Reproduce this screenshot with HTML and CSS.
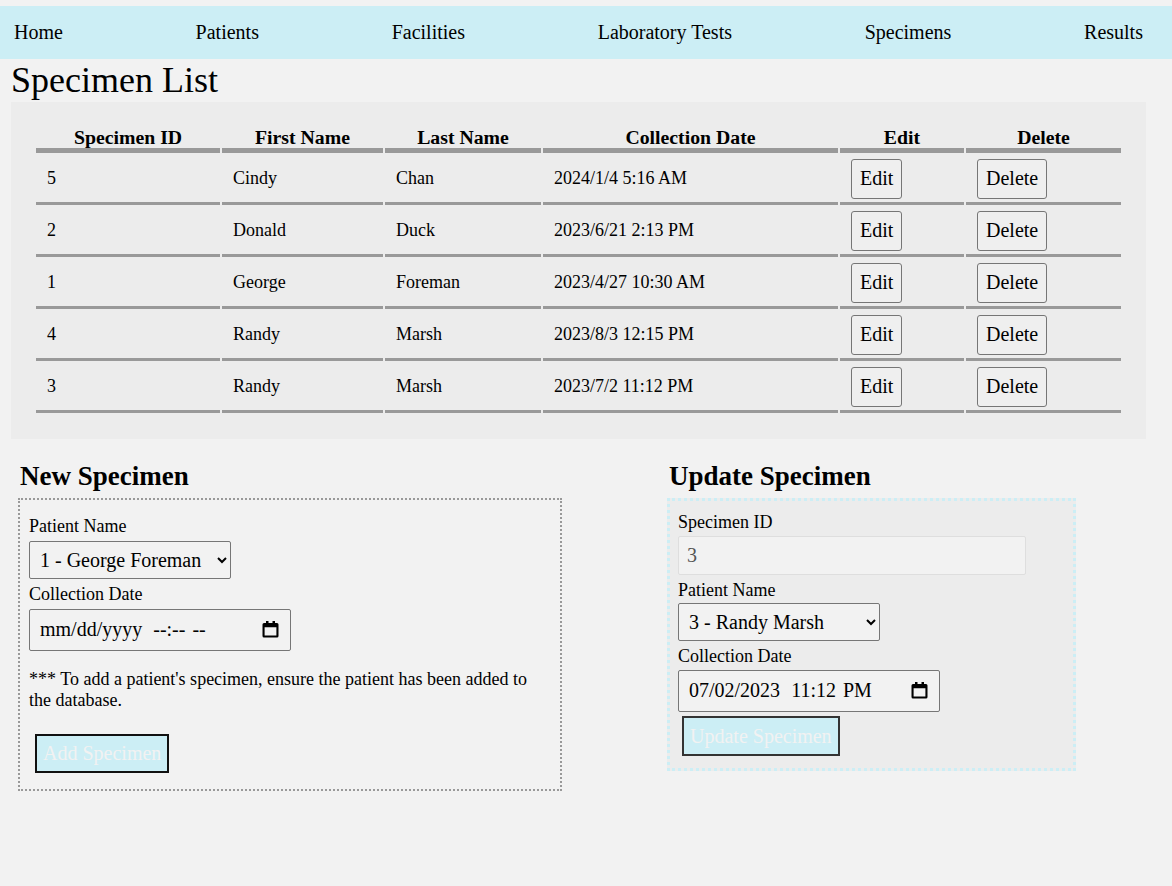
FILE: index.html
```html
<!DOCTYPE html>
<html lang="en">
<head>
<meta charset="utf-8">
<title>Specimen List</title>
<link rel="stylesheet" href="styles.css">
</head>
<body>
<nav class="topnav">
  <a class="nav-link" href="#">Home</a>
  <a class="nav-link" href="#">Patients</a>
  <a class="nav-link" href="#">Facilities</a>
  <a class="nav-link" href="#">Laboratory Tests</a>
  <a class="nav-link" href="#">Specimens</a>
  <a class="nav-link" href="#">Results</a>
</nav>
<main class="page">
  <h1 class="page-title">Specimen List</h1>
  <div class="table-wrap">
    <table class="specimen-table">
      <colgroup>
        <col class="col-id">
        <col class="col-first">
        <col class="col-last">
        <col class="col-date">
        <col class="col-edit">
        <col class="col-delete">
      </colgroup>
      <thead>
        <tr>
          <th>Specimen ID</th>
          <th>First Name</th>
          <th>Last Name</th>
          <th>Collection Date</th>
          <th>Edit</th>
          <th>Delete</th>
        </tr>
      </thead>
      <tbody>
        <tr>
          <td>5</td><td>Cindy</td><td>Chan</td><td>2024/1/4 5:16 AM</td>
          <td><button class="row-btn" type="button">Edit</button></td>
          <td><button class="row-btn" type="button">Delete</button></td>
        </tr>
        <tr>
          <td>2</td><td>Donald</td><td>Duck</td><td>2023/6/21 2:13 PM</td>
          <td><button class="row-btn" type="button">Edit</button></td>
          <td><button class="row-btn" type="button">Delete</button></td>
        </tr>
        <tr>
          <td>1</td><td>George</td><td>Foreman</td><td>2023/4/27 10:30 AM</td>
          <td><button class="row-btn" type="button">Edit</button></td>
          <td><button class="row-btn" type="button">Delete</button></td>
        </tr>
        <tr>
          <td>4</td><td>Randy</td><td>Marsh</td><td>2023/8/3 12:15 PM</td>
          <td><button class="row-btn" type="button">Edit</button></td>
          <td><button class="row-btn" type="button">Delete</button></td>
        </tr>
        <tr>
          <td>3</td><td>Randy</td><td>Marsh</td><td>2023/7/2 11:12 PM</td>
          <td><button class="row-btn" type="button">Edit</button></td>
          <td><button class="row-btn" type="button">Delete</button></td>
        </tr>
      </tbody>
    </table>
  </div>

  <div class="forms">
    <section class="form-col form-col-new">
      <h2 class="form-title">New Specimen</h2>
      <form class="form-box new-box">
        <label class="field-label" for="newPatient">Patient Name</label>
        <select class="field select-field" id="newPatient">
          <option>1 - George Foreman</option>
          <option>2 - Donald Duck</option>
          <option>3 - Randy Marsh</option>
          <option>4 - Cindy Chan</option>
        </select>
        <label class="field-label">Collection Date</label>
        <div class="field date-field" role="textbox" aria-label="Collection Date">
          <span class="dt-date">mm/dd/yyyy</span>
          <span class="dt-time">--:--</span>
          <span class="dt-ampm">--</span>
          <svg class="cal-icon" viewBox="0 0 17 17" width="17" height="17" aria-hidden="true">
            <path fill="#000" fill-rule="evenodd" d="M4 0h2.5v2h4V0H13v2h2a1.5 1.5 0 0 1 1.5 1.5v11.5a1.5 1.5 0 0 1-1.5 1.5H2a1.5 1.5 0 0 1-1.5-1.5V3.5A1.5 1.5 0 0 1 2 2h2z M2.6 6.2h11.8v8.2H2.6z"/>
          </svg>
        </div>
        <p class="note">*** To add a patient's specimen, ensure the patient has been added to the database.</p>
        <button class="submit-btn add-btn" type="button">Add Specimen</button>
      </form>
    </section>

    <section class="form-col form-col-update">
      <h2 class="form-title">Update Specimen</h2>
      <form class="form-box update-box">
        <label class="field-label" for="updId">Specimen ID</label>
        <input class="field id-field" id="updId" type="text" value="3" readonly>
        <label class="field-label" for="updPatient">Patient Name</label>
        <select class="field select-field" id="updPatient">
          <option>1 - George Foreman</option>
          <option>2 - Donald Duck</option>
          <option selected>3 - Randy Marsh</option>
          <option>4 - Cindy Chan</option>
        </select>
        <label class="field-label">Collection Date</label>
        <div class="field date-field" role="textbox" aria-label="Collection Date">
          <span class="dt-date">07/02/2023</span>
          <span class="dt-time">11:12</span>
          <span class="dt-ampm">PM</span>
          <svg class="cal-icon" viewBox="0 0 17 17" width="17" height="17" aria-hidden="true">
            <path fill="#000" fill-rule="evenodd" d="M4 0h2.5v2h4V0H13v2h2a1.5 1.5 0 0 1 1.5 1.5v11.5a1.5 1.5 0 0 1-1.5 1.5H2a1.5 1.5 0 0 1-1.5-1.5V3.5A1.5 1.5 0 0 1 2 2h2z M2.6 6.2h11.8v8.2H2.6z"/>
          </svg>
        </div>
        <button class="submit-btn update-btn" type="button">Update Specimen</button>
      </form>
    </section>
  </div>
</main>
</body>
</html>
```

FILE: styles.css
```css
html, body {
  margin: 0;
  padding: 0;
}

body {
  background: #f2f2f2;
  color: #000;
  font-family: "Liberation Serif", "Times New Roman", serif;
  font-size: 18px;
}

.topnav {
  margin-top: 6px;
  height: 52.6px;
  background: #cceef5;
  display: flex;
  align-items: center;
  justify-content: space-between;
  padding: 0 29px 0 14px;
}

.nav-link {
  color: #000;
  text-decoration: none;
  font-size: 20px;
}

.page-title {
  margin: 0 0 0 11px;
  font-size: 36px;
  font-weight: normal;
  line-height: normal;
}

.table-wrap {
  margin: 1px 0 0 11px;
  width: 1135px;
  box-sizing: border-box;
  padding: 22px 23px 24px 23px;
  background: #ececec;
}

.specimen-table {
  width: 100%;
  table-layout: fixed;
  border-collapse: separate;
  border-spacing: 2px;
}

.col-id { width: 184px; }
.col-first { width: 161px; }
.col-last { width: 156px; }
.col-date { width: 295px; }
.col-edit { width: 124px; }
.col-delete { width: 155px; }

.specimen-table th {
  font-size: 19.8px;
  font-weight: bold;
  line-height: 22px;
  padding: 0;
  text-align: center;
  border-bottom: 5px solid #999;
}

.specimen-table td {
  font-size: 18px;
  padding: 4px 11px 3px 11px;
  text-align: left;
  vertical-align: middle;
  border-bottom: 3px solid #999;
}

.row-btn {
  font-family: "Liberation Serif", "Times New Roman", serif;
  font-size: 20px;
  height: 40px;
  box-sizing: border-box;
  padding: 0 8px;
  margin: 0;
  background: #efefef;
  color: #000;
  border: 1px solid #767676;
  border-radius: 3px;
  display: block;
}

.forms {
  display: flex;
  align-items: flex-start;
  margin-left: 18px;
  gap: 105px;
}

.form-col-new {
  width: 544px;
}

.form-col-update {
  width: 409px;
}

.form-title {
  font-size: 27px;
  font-weight: bold;
  line-height: normal;
  margin: 22.4px 0 6px 0;
  padding-left: 2px;
}

.form-box {
  display: flex;
  flex-direction: column;
  align-items: flex-start;
  box-sizing: border-box;
}

.new-box {
  margin-top: 1.6px;
  border: 2px dotted #999;
  padding: 16px 9px 16px 9px;
}

.update-box {
  border: 3px dotted #cceef5;
  background: #ececec;
  padding: 10px 8px 11.7px 8px;
}

.field-label {
  display: block;
  line-height: normal;
  margin-bottom: 4px;
}

.update-box .field-label {
  margin-top: 1.5px;
  margin-bottom: 2.5px;
}

.field {
  font-family: "Liberation Serif", "Times New Roman", serif;
  font-size: 20px;
  color: #000;
  box-sizing: border-box;
  margin: 0 0 4px 0;
}

.select-field {
  width: 202px;
  height: 38px;
  padding: 0 6px;
  background-color: #f2f2f2;
  border: 1px solid #767676;
  border-radius: 2px;
}

.new-box .select-field {
  margin-bottom: 5px;
}

.update-box .select-field {
  margin-bottom: 3.5px;
}

.date-field {
  display: flex;
  align-items: center;
  width: 262px;
  height: 42px;
  padding: 0 11px 0 10px;
  background-color: #f2f2f2;
  border: 1px solid #767676;
  border-radius: 2px;
  margin-bottom: 0;
  white-space: nowrap;
}

.dt-time {
  margin-left: 11px;
}

.dt-ampm {
  margin-left: 7px;
}

.cal-icon {
  display: block;
  margin-left: auto;
  flex: none;
}

.id-field {
  width: 348px;
  height: 39.5px;
  padding: 0 8px;
  background: #f2f2f2;
  border: 1px solid #dedede;
  border-radius: 2px;
  color: #555;
  margin-bottom: 3px;
  outline: none;
}

.note {
  margin: 18px 0;
  font-size: 18px;
  line-height: normal;
}

.submit-btn {
  font-family: "Liberation Serif", "Times New Roman", serif;
  font-size: 20px;
  height: 40px;
  box-sizing: border-box;
  padding: 0 6px;
  background: #cceef5;
  color: #f2f2f2;
  border-radius: 0;
}

.add-btn {
  height: 39px;
  margin: 5px 0 0 6px;
  border: 2px solid #111;
}

.update-btn {
  margin: 4.2px 0 0 4px;
  border: 2px solid #333;
}
```
